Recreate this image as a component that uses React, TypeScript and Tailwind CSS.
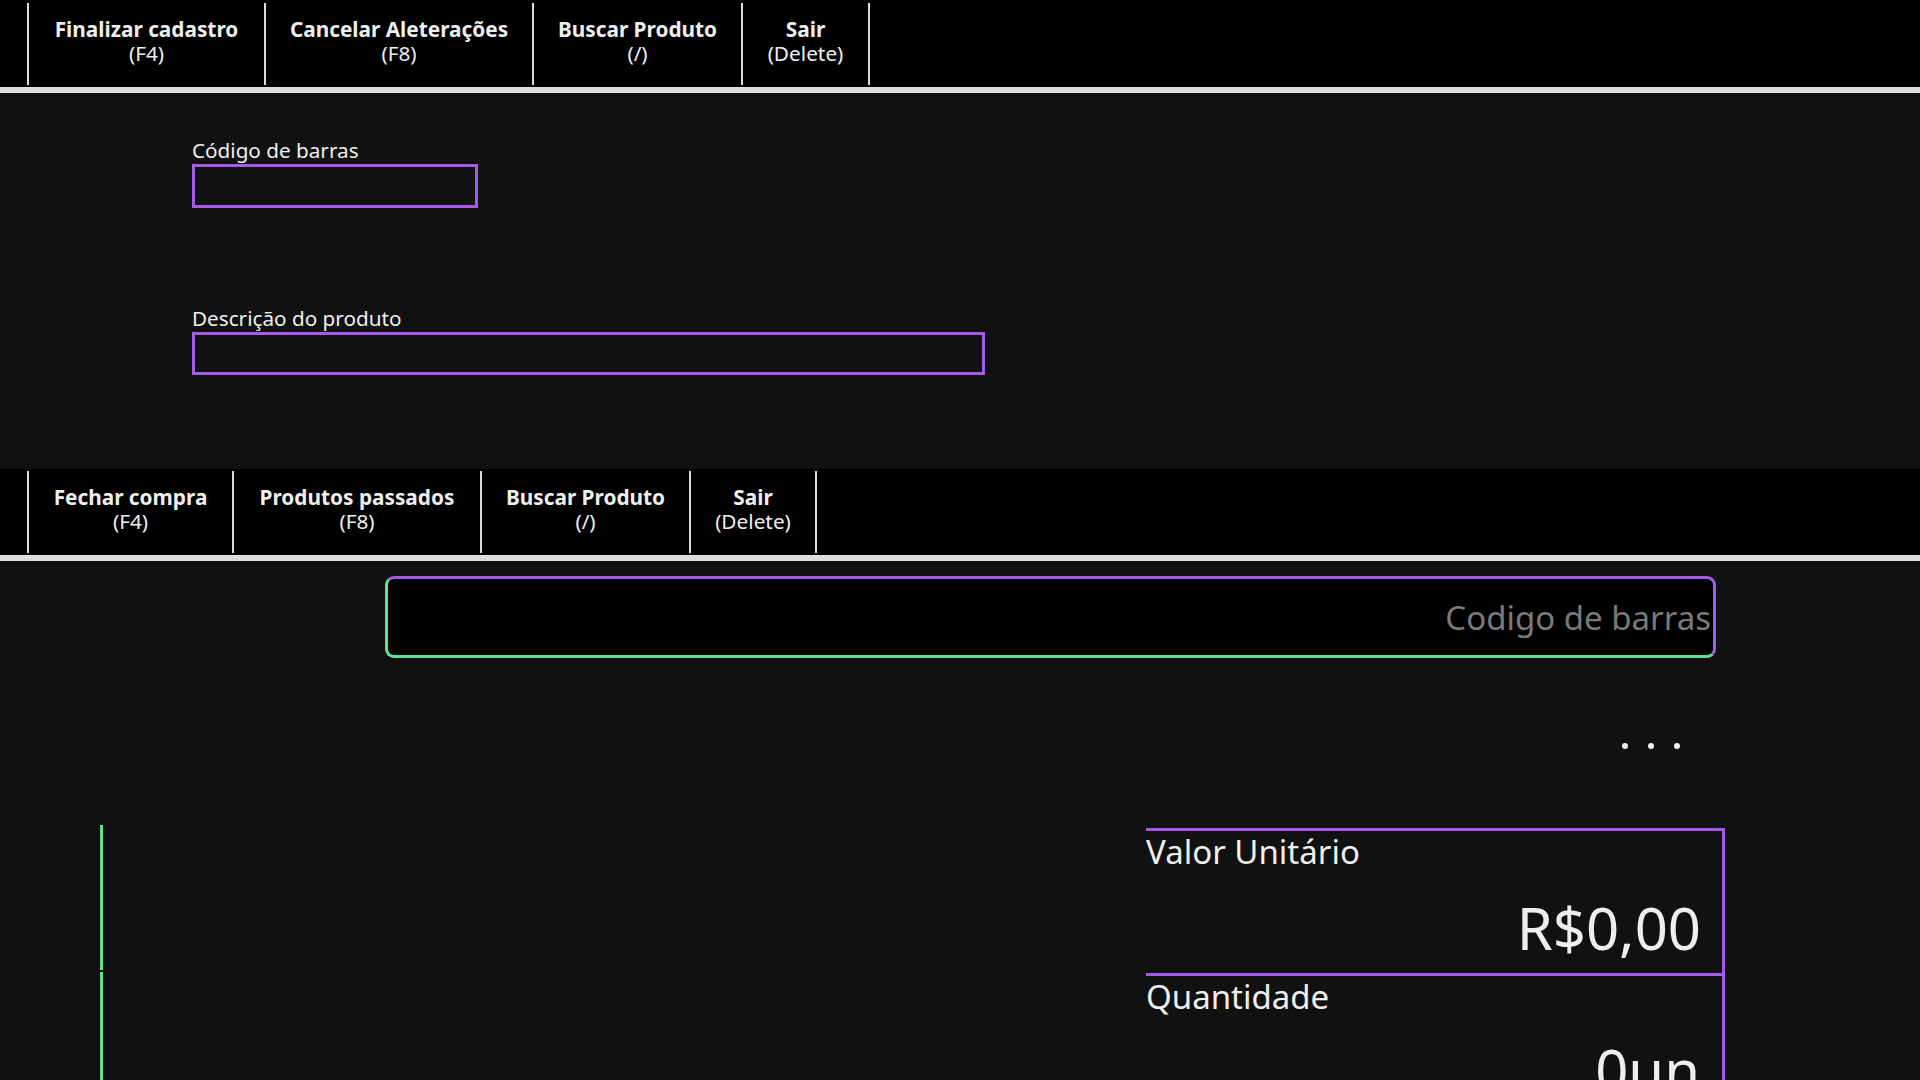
import React from "react";

const PURPLE = "border-[#a35ce6]";

function BarButton({ title, keyName, width, last }: { title: string; keyName: string; width: string; last?: boolean }) {
  return (
    <div
      className={`${width} h-[82px] shrink-0 border-l-2 border-[#dcdcdc] ${last ? "border-r-2" : ""} flex flex-col items-center justify-start pt-[14px] text-[20.8px] leading-6 text-[#eeeeee]`}
    >
      <span className="font-bold whitespace-nowrap">{title}</span>
      <span className="whitespace-nowrap">{keyName}</span>
    </div>
  );
}

export default function App() {
  return (
    <div className="w-[1920px] h-[1080px] overflow-hidden bg-[#111111] text-[#eeeeee] font-['Noto_Sans',sans-serif]">
      {/* Top bar */}
      <div className="h-[93px] bg-black border-b-[6px] border-[#dddddd] flex pl-[27px] pt-[3px]">
        <BarButton title="Finalizar cadastro" keyName="(F4)" width="w-[237px]" />
        <BarButton title="Cancelar Aleterações" keyName="(F8)" width="w-[268px]" />
        <BarButton title="Buscar Produto" keyName="(/)" width="w-[209px]" />
        <BarButton title="Sair" keyName="(Delete)" width="w-[129px]" last />
      </div>

      {/* Form section */}
      <div className="h-[376px] pl-[192px] pt-[43px] flex flex-col gap-[96px]">
        <div className="flex flex-col">
          <label className="text-[20.7px] leading-[28px]">Código de barras</label>
          <input className={`w-[286px] h-[44px] border-[3px] ${PURPLE} bg-transparent outline-none`} />
        </div>
        <div className="flex flex-col">
          <label className="text-[20.7px] leading-[28px]">Descrição do produto</label>
          <input className={`w-[793px] h-[43px] border-[3px] ${PURPLE} bg-transparent outline-none`} />
        </div>
      </div>

      {/* Second bar */}
      <div className="h-[92px] bg-black border-b-[6px] border-[#dddddd] flex pl-[27px] pt-[2px]">
        <BarButton title="Fechar compra" keyName="(F4)" width="w-[205px]" />
        <BarButton title="Produtos passados" keyName="(F8)" width="w-[248px]" />
        <BarButton title="Buscar Produto" keyName="(/)" width="w-[209px]" />
        <BarButton title="Sair" keyName="(Delete)" width="w-[128px]" last />
      </div>

      {/* Sales section */}
      <div className="flex flex-col">
        <div className="pl-[385px] pt-[15px]">
          <input
            placeholder="Codigo de barras"
            className="w-[1331px] h-[82px] rounded-[9px] border-[3px] border-t-[#a35ce6] border-r-[#a35ce6] border-b-[#5ee09b] border-l-[#5ee09b] bg-black text-right pr-[2px] text-[33px] text-[#eeeeee] placeholder:text-[#7a7a7a] outline-none"
          />
        </div>

        <div className="flex justify-end pr-[240px] mt-[85px] gap-[20px]">
          <span className="w-[6px] h-[6px] rounded-full bg-[#f2f2f2]" />
          <span className="w-[6px] h-[6px] rounded-full bg-[#f2f2f2]" />
          <span className="w-[6px] h-[6px] rounded-full bg-[#f2f2f2]" />
        </div>

        <div className="flex mt-[76px] pl-[100px] pr-[195px]">
          <div className="flex-1 flex flex-col gap-[2px]">
            <div className="h-[145px] border-l-[3px] border-[#5ee09b]" />
            <div className="h-[200px] border-l-[3px] border-[#5ee09b]" />
          </div>
          <div className="w-[579px] mt-[3px] flex flex-col">
            <div className="h-[145px] shrink-0 border-t-[3px] border-r-[3px] border-[#a35ce6] flex flex-col">
              <span className="text-[33px] leading-[41px]">Valor Unitário</span>
              <span className="text-[58px] leading-[72px] text-right pr-[21px] mt-[20px]">R$0,00</span>
            </div>
            <div className="h-[200px] shrink-0 border-t-[3px] border-r-[3px] border-[#a35ce6] flex flex-col">
              <span className="text-[33px] leading-[41px]">Quantidade</span>
              <span className="text-[58px] leading-[72px] text-right pr-[22px] mt-[17px]">0un</span>
            </div>
          </div>
        </div>
      </div>
    </div>
  );
}
